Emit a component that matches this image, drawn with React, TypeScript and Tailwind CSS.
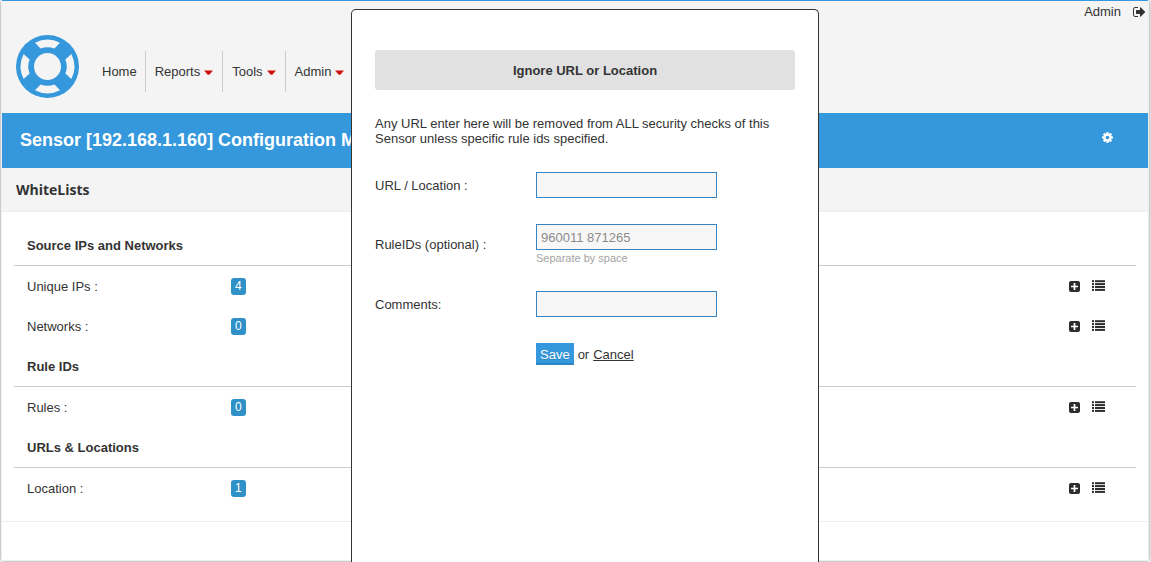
import React from "react";

type Row = { label: string; count: number };
type Section = { title: string; rows: Row[] };

const sections: Section[] = [
  {
    title: "Source IPs and Networks",
    rows: [
      { label: "Unique IPs :", count: 4 },
      { label: "Networks :", count: 0 },
    ],
  },
  { title: "Rule IDs", rows: [{ label: "Rules :", count: 0 }] },
  { title: "URLs & Locations", rows: [{ label: "Location :", count: 1 }] },
];

const menus = ["Home", "Reports", "Tools", "Admin"];

function Logo() {
  return (
    <svg viewBox="0 0 63 63" className="block size-[63px]" aria-hidden="true">
      <circle cx="31.5" cy="31.5" r="31.5" fill="#3598dc" />
      <circle cx="31.5" cy="31.5" r="13.5" fill="#f4f4f4" />
      {[0, 90, 180, 270].map((angle) => (
        <path
          key={angle}
          transform={`rotate(${angle} 31.5 31.5)`}
          d="M19 7.700 A27 27 0 0 1 44 7.700 L38.500 13.600 A19.200 19.200 0 0 0 24.500 13.600 Z"
          fill="#f4f4f4"
        />
      ))}
    </svg>
  );
}

function Caret() {
  return (
    <svg viewBox="0 0 9 5" className="mt-[2px] h-[5px] w-[9px]" aria-hidden="true">
      <path d="M0 1 Q0 0 1 0 H8 Q9 0 9 1 L5.500 5 H3.500 Z" fill="#f0a8a4" />
      <path d="M0.500 0.800 H8.500 L5.300 4.500 H3.700 Z" fill="#cc0d0d" />
    </svg>
  );
}

function SignOutIcon() {
  return (
    <svg viewBox="0 0 1792 1792" className="size-[14px]" fill="currentColor" aria-hidden="true">
      <path d="M640 1440q0 4 1 20t.5 26.5-3 23.5-10 19.5-20.5 6.5h-320q-119 0-203.5-84.5t-84.5-203.5v-704q0-119 84.5-203.5t203.5-84.5h320q13 0 22.500 9.500t9.500 22.500q0 4 1 20t.5 26.500-3 23.500-10 19.500-20.500 6.500h-320q-66 0-113 47t-47 113v704q0 66 47 113t113 47h312l11.500 1 11.500 3 8 5.500 7 9 2 13.500zm928-544q0 26-19 45l-544 544q-19 19-45 19t-45-19-19-45v-288h-448q-26 0-45-19t-19-45v-384q0-26 19-45t45-19h448v-288q0-26 19-45t45-19 45 19l544 544q19 19 19 45z" />
    </svg>
  );
}

function CogIcon() {
  return (
    <svg viewBox="128 128 1536 1536" className="size-[11px]" fill="currentColor" aria-hidden="true">
      <path d="M1152 896q0-106-75-181t-181-75-181 75-75 181 75 181 181 75 181-75 75-181zm512-109v222q0 12-8 23t-20 13l-185 28q-19 54-39 91 35 50 107 138 10 12 10 25t-9 23q-27 37-99 108t-94 71q-12 0-26-9l-138-108q-44 23-91 38-16 136-29 186-7 28-36 28h-222q-14 0-24.500-8.500t-11.500-21.500l-28-184q-49-16-90-37l-141 107q-10 9-25 9-14 0-25-11-126-114-165-168-7-10-7-23 0-12 8-23 15-21 51-66.500t54-70.500q-27-50-41-99l-183-27q-13-2-21-12.500t-8-23.500v-222q0-12 8-23t19-13l186-28q14-46 39-92-40-57-107-138-10-12-10-24 0-10 9-23 26-36 98.500-107.500t94.500-71.500q13 0 26 10l138 107q44-23 91-38 16-136 29-186 7-28 36-28h222q14 0 24.500 8.500t11.500 21.500l28 184q49 16 90 37l142-107q9-9 24-9 13 0 25 10 129 119 165 170 7 8 7 22 0 12-8 23-15 21-51 66.500t-54 70.500q26 50 41 98l183 28q13 2 21 12.500t8 23.500z" />
    </svg>
  );
}

function PlusSquareIcon() {
  return (
    <svg viewBox="0 0 11 11" className="block size-[11px]" aria-hidden="true">
      <rect width="11" height="11" rx="2" fill="#2d2d2d" />
      <path d="M5.500 2 V9 M2 5.500 H9" stroke="#fff" strokeWidth="1.700" />
    </svg>
  );
}

function ListIcon() {
  return (
    <svg viewBox="0 0 13 13" className="block size-[13px]" aria-hidden="true">
      {[0.2, 3.1, 6, 8.900].map((y) => (
        <g key={y} fill="#2d2d2d">
          <rect x="0" y={y} width="2" height="2" />
          <rect x="3" y={y} width="10" height="2" />
        </g>
      ))}
    </svg>
  );
}

function Field({ id, label, placeholder, hint }: { id: string; label: string; placeholder?: string; hint?: string }) {
  return (
    <div className="flex items-center">
      <label htmlFor={id} className="w-[161px] shrink-0">
        {label}
      </label>
      <div>
        <input
          id={id}
          type="text"
          placeholder={placeholder}
          className="block h-[26px] w-[181px] border border-[#3585c5] bg-[#f7f7f7] px-1 placeholder:text-[#8c8c8c]"
        />
        {hint && <p className="h-[15px] text-[11px] leading-[17px] text-[#a3a3a3]">{hint}</p>}
      </div>
    </div>
  );
}

function IgnoreDialog() {
  return (
    <div
      role="dialog"
      aria-labelledby="dialog-title"
      className="fixed top-[9px] bottom-0 left-[351px] w-[468px] rounded-t-[5px] border border-b-0 border-[#333] bg-white px-[23px] pt-10"
    >
      <h2 id="dialog-title" className="rounded-[3px] bg-[#e1e1e1] pt-px text-center font-bold leading-[39px]">
        Ignore URL or Location
      </h2>
      <p className="mt-[26px]">
        Any URL enter here will be removed from ALL security checks of this Sensor unless specific rule ids specified.
      </p>
      <form className="mt-[26px]" onSubmit={(e) => e.preventDefault()}>
        <div className="flex flex-col gap-[26px]">
          <Field id="url" label="URL / Location :" />
          <Field id="rules" label="RuleIDs (optional) :" placeholder="960011 871265" hint="Separate by space" />
          <Field id="comments" label="Comments:" />
        </div>
        <div className="mt-[26px] flex items-center gap-1 pl-[161px]">
          <button
            type="submit"
            className="h-[22px] border-b-2 border-[#2a86c8] bg-[#3598dc] px-1 pt-[2px] text-white text-shadow-2xs"
          >
            Save
          </button>
          <span>or</span>
          <a href="#cancel" className="underline">
            Cancel
          </a>
        </div>
      </form>
    </div>
  );
}

export default function App() {
  return (
    <div className="bg-white pr-[2px] pb-px pl-px font-['Liberation_Sans',Arial,sans-serif] text-[13px] leading-[15px] text-[#333]">
      <div className="border border-t-0 border-[#eee] bg-white shadow-[0_0_5px_#888]">
        <header className="border-t border-[#3598dc] bg-[#f4f4f4]">
          <div className="flex items-center justify-end gap-3 pt-[3px] pr-px">
            <a href="#account">Admin</a>
            <button type="button" aria-label="Sign out">
              <SignOutIcon />
            </button>
          </div>
          <div className="flex h-[94px] items-start px-[14px] pt-4">
            <a href="#home" aria-label="Dashboard">
              <Logo />
            </a>
            <nav className="mt-4 ml-[14px] flex">
              {menus.map((name, i) => (
                <a
                  key={name}
                  href={`#${name.toLowerCase()}`}
                  className="flex h-[41px] items-center gap-1 border-l border-[#ccc] px-[9px] first:border-l-0 first:pr-2"
                >
                  {name}
                  {i > 0 && <Caret />}
                </a>
              ))}
            </nav>
          </div>
        </header>
        <div className="flex h-[55px] items-center justify-between bg-[#3598dc] pr-[35px] pb-[2px] pl-[18px] text-white">
          <h1 className="text-lg font-bold">Sensor [192.168.1.160] Configuration Management</h1>
          <button type="button" aria-label="Settings" className="mb-1">
            <CogIcon />
          </button>
        </div>
        <h2 className="border-b border-[#eee] bg-[#f4f4f4] px-[14px] font-['Open_Sans',sans-serif] text-sm font-bold leading-[43px]">
          WhiteLists
        </h2>
        <main className="border-b border-[#eee] px-3 py-[13px]">
          <table className="w-full border-separate border-spacing-0">
            {sections.map((section) => (
              <tbody key={section.title}>
                <tr>
                  <th colSpan={3} className="h-[41px] border-b border-[#ccc] px-[13px] py-0 text-left font-bold">
                    {section.title}
                  </th>
                </tr>
                {section.rows.map((row) => (
                  <tr key={row.label} className="h-10">
                    <td className="w-[217px] pl-[13px]">{row.label}</td>
                    <td>
                      <span className="inline-block rounded-[3px] bg-[#3091c9] px-1 text-[12px] leading-[17px] text-white">
                        {row.count}
                      </span>
                    </td>
                    <td className="pr-[31px]">
                      <div className="flex items-center justify-end gap-3">
                        <button type="button" aria-label={`Add to ${row.label}`}>
                          <PlusSquareIcon />
                        </button>
                        <button type="button" aria-label={`List ${row.label}`}>
                          <ListIcon />
                        </button>
                      </div>
                    </td>
                  </tr>
                ))}
              </tbody>
            ))}
          </table>
        </main>
        <footer className="h-[38px]" />
      </div>
      <IgnoreDialog />
    </div>
  );
}
